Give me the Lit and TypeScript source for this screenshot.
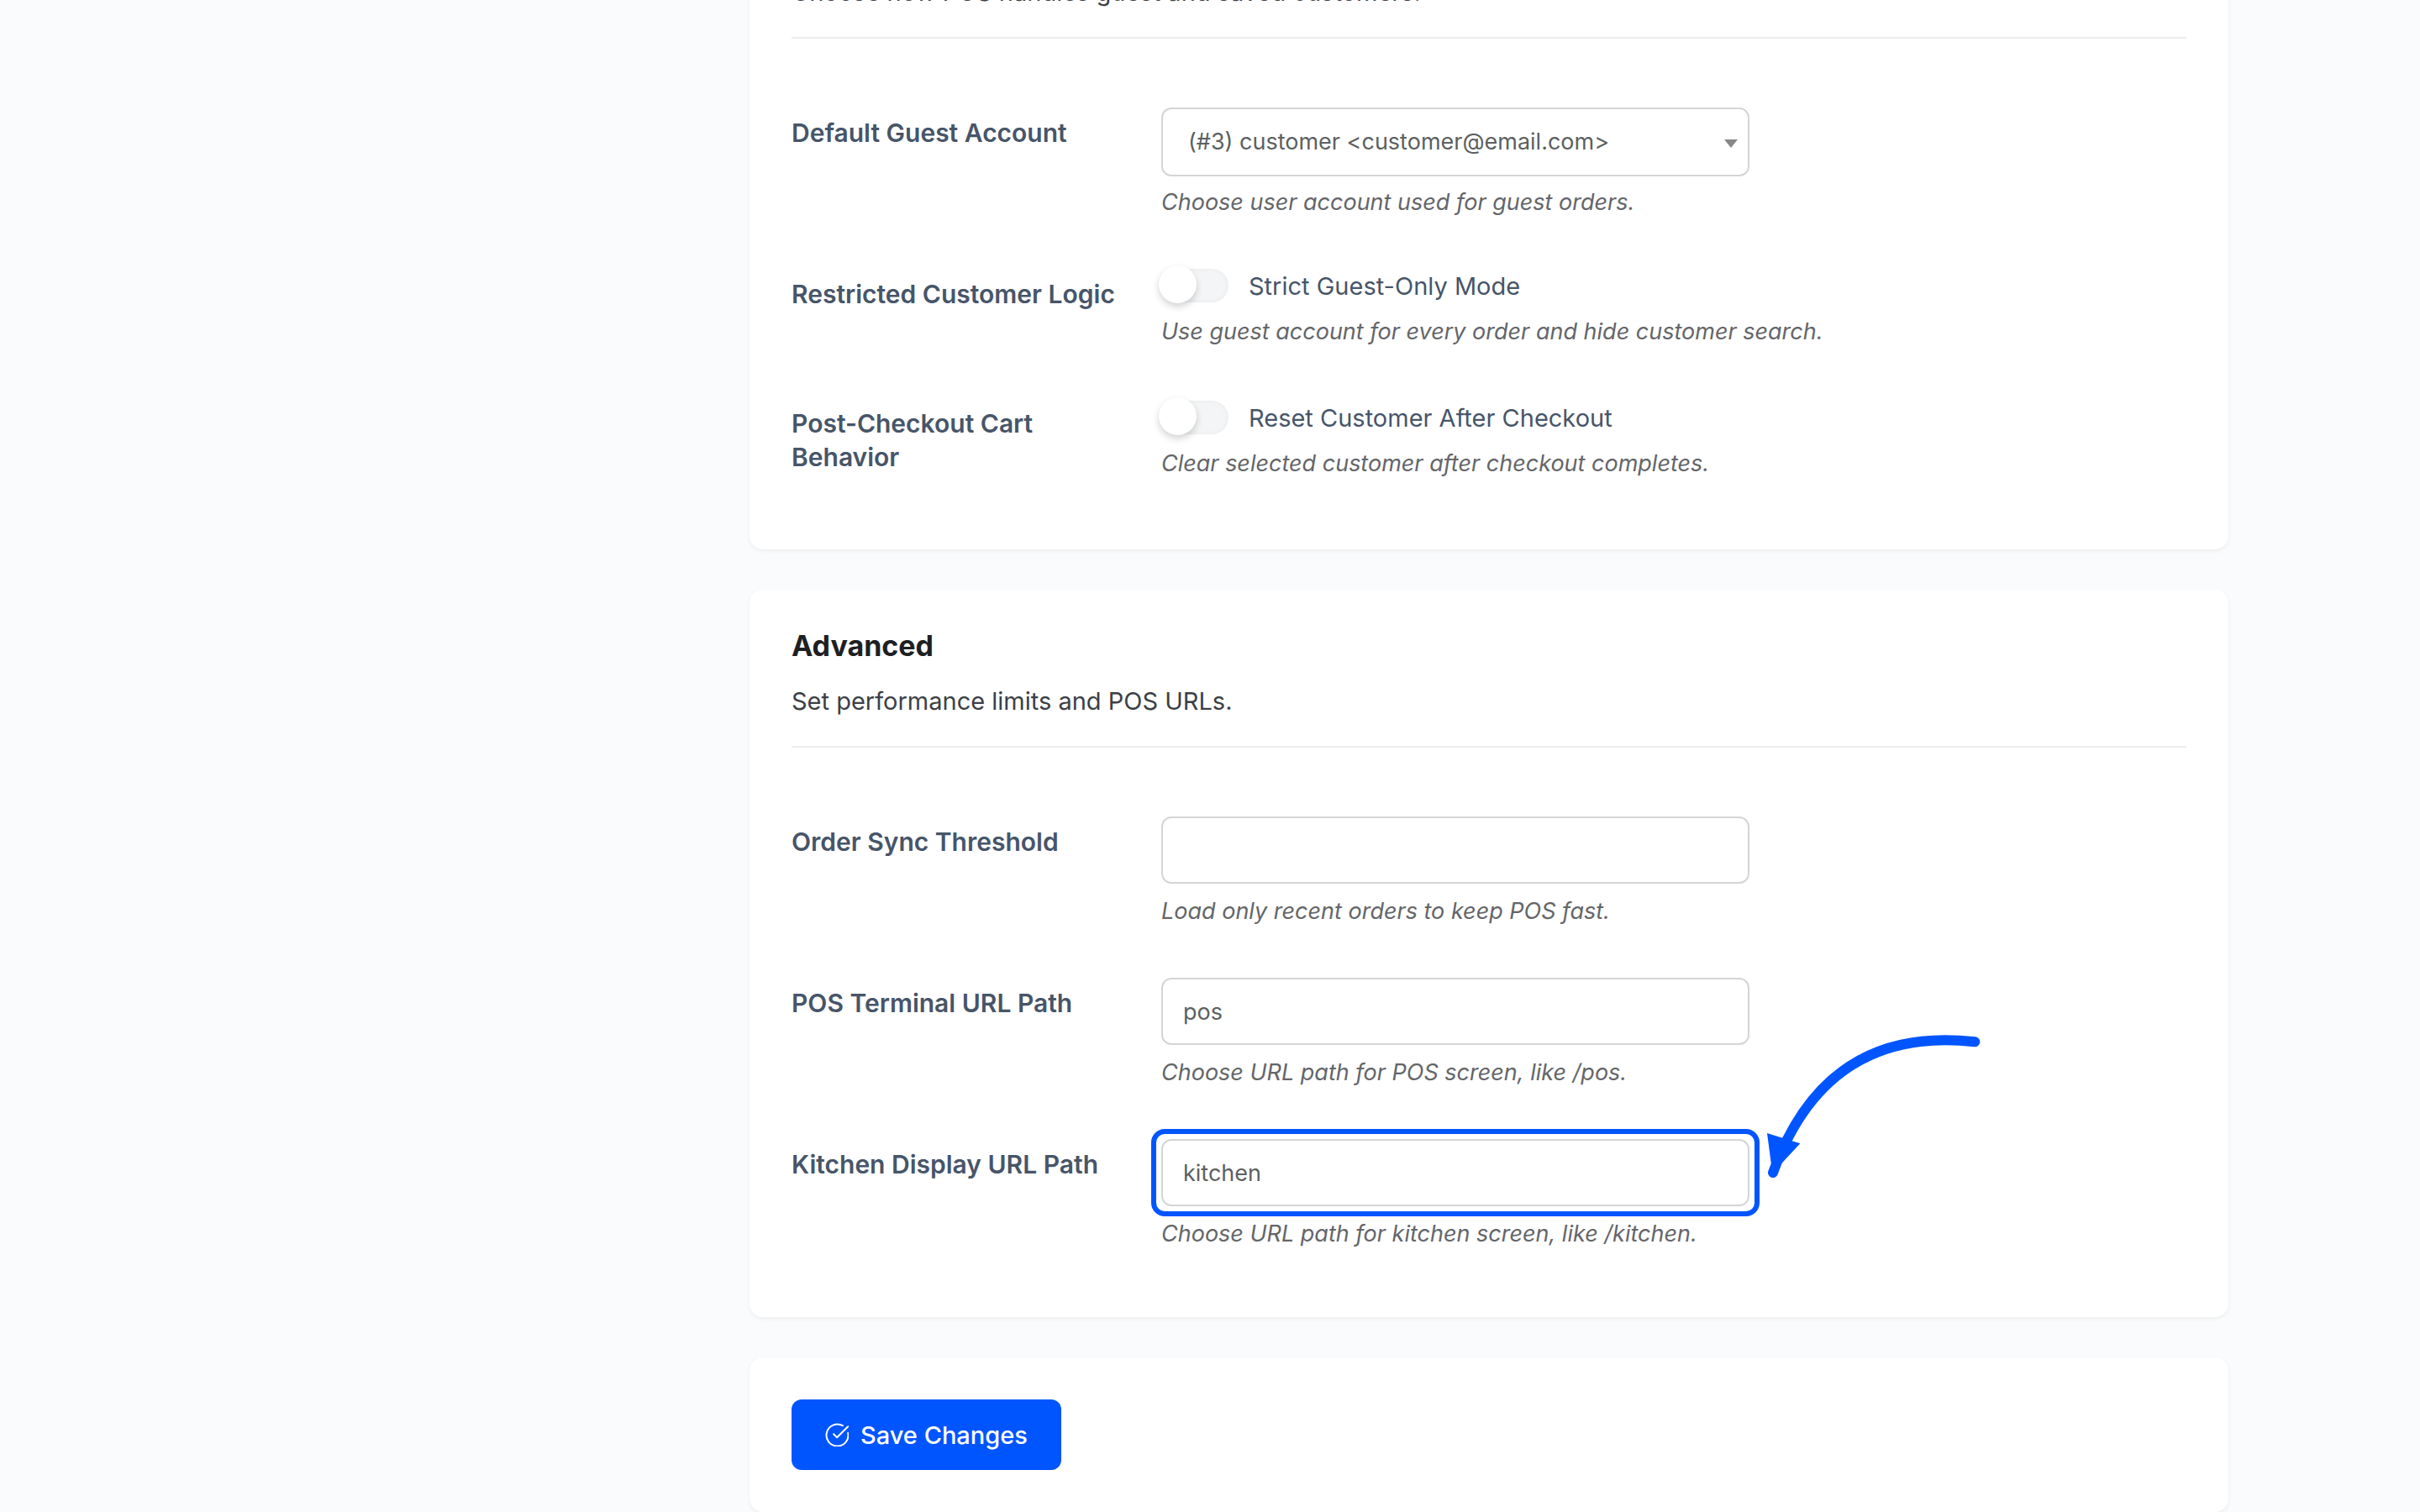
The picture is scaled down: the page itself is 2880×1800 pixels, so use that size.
import { LitElement, html, css, svg, nothing, type TemplateResult } from "lit";
import { customElement, property } from "lit/decorators.js";

const saveIcon = svg`
  <svg class="icon" viewBox="0 0 28 28" width="28" height="28" fill="none" stroke="currentColor"
    stroke-width="2" stroke-linecap="round" stroke-linejoin="round" aria-hidden="true">
    <path d="M20.8 3.2A13 13 0 1 0 27.2 11.8" />
    <path d="M10.1 13.2L14.1 17.2L27.2 4.2" />
  </svg>`;

/** White panel with an optional heading block above its rows. */
@customElement("settings-card")
export class SettingsCard extends LitElement {
  @property() heading = "";
  @property() description = "";

  static styles = css`
    :host {
      display: block;
      background: #ffffff;
      border-radius: 16px;
      padding: 50px;
      box-shadow: 0 2px 5px rgba(0, 0, 0, 0.06);
    }
    :host([continued]) {
      padding-top: 0;
      border-radius: 0 0 16px 16px;
      margin-top: -32px;
    }
    .head {
      padding-bottom: 30px;
      margin-bottom: 52px;
      border-bottom: 2px solid #ececed;
    }
    .title {
      margin: 0 0 26px;
      font-size: 34px;
      line-height: 34px;
      font-weight: 700;
      color: #1d2023;
    }
    .text {
      margin: 0;
      font-size: 29px;
      line-height: 46px;
      color: #3c4045;
    }
  `;

  render() {
    return html`
      ${this.description
        ? html`<header class="head">
            ${this.heading ? html`<h2 class="title">${this.heading}</h2>` : nothing}
            <p class="text">${this.description}</p>
          </header>`
        : nothing}
      <slot></slot>
    `;
  }
}

@customElement("app-root")
export class AppRoot extends LitElement {
  static styles = css`
    :host {
      display: block;
      min-height: 100vh;
      overflow: hidden;
      background: #fafbfd;
      font-family: Inter, "Liberation Sans", sans-serif;
      font-size: 29px;
    }
    .page {
      display: flex;
      flex-direction: column;
      gap: 48px;
      padding: 0 228px 0 892px;
    }
    .row {
      display: grid;
      grid-template-columns: 440px 1fr;
    }
    .name {
      padding: 40px 30px 40px 0;
      font-size: 30px;
      line-height: 40px;
      font-weight: 600;
      color: #475569;
    }
    .control {
      align-self: center;
      padding: 30px 0 28px;
    }
    .box {
      position: relative;
      max-width: 700px;
    }
    .field {
      display: block;
      box-sizing: border-box;
      width: 100%;
      height: 80px;
      margin: 0;
      padding: 0 24px;
      border: 2px solid #d3d5d7;
      border-radius: 12px;
      background: #ffffff;
      font: inherit;
      font-size: 27px;
      color: #5c5f62;
      outline: none;
    }
    .select {
      appearance: none;
      height: 82px;
      margin-bottom: -2px;
      padding: 0 48px 2px 30px;
    }
    .caret {
      position: absolute;
      right: 14px;
      top: 38px;
      pointer-events: none;
    }
    .help {
      margin: 12px 0 0;
      font-size: 27px;
      line-height: 42px;
      font-style: italic;
      color: #646669;
    }
    .toggle {
      display: flex;
      gap: 24px;
      line-height: 42px;
      color: #475569;
    }
    .switch {
      appearance: none;
      position: relative;
      flex: none;
      width: 80px;
      height: 40px;
      margin: 0;
      border-radius: 20px;
      background: #f3f5f6;
      box-shadow: inset 0 0 6px rgba(0, 0, 0, 0.05);
    }
    .switch::before {
      content: "";
      position: absolute;
      left: -3px;
      top: -4px;
      width: 45px;
      height: 45px;
      border-radius: 50%;
      background: #ffffff;
      box-shadow: 0 4px 8px rgba(0, 0, 0, 0.18);
    }
    .switch:checked::before {
      left: 38px;
    }
    .ring {
      position: absolute;
      inset: -12px;
      border: 6px solid #0055ff;
      border-radius: 16px;
      pointer-events: none;
    }
    .pointer {
      position: absolute;
      left: 100%;
      top: -140px;
      margin-left: 6px;
      pointer-events: none;
    }
    .save {
      display: flex;
      align-items: center;
      gap: 14px;
      height: 84px;
      padding: 0 40px;
      border: 0;
      border-radius: 12px;
      background: #0055ff;
      color: #ffffff;
      font: inherit;
      font-weight: 500;
    }
  `;

  private row(id: string, name: string, control: TemplateResult, help: string) {
    return html`
      <div class="row">
        <label class="name" for=${id}>${name}</label>
        <div class="control">
          ${control}
          <p class="help">${help}</p>
        </div>
      </div>
    `;
  }

  private input(id: string, value = "", highlight = false) {
    return html`
      <div class="box">
        <input class="field" id=${id} type="text" .value=${value} />
        ${highlight
          ? html`<div class="ring"></div>
              <svg class="pointer" viewBox="144 48 840 600" width="280" height="200" aria-hidden="true">
                <path d="M931 121Q400 60 210 588" fill="none" stroke="#0055ff" stroke-width="36" stroke-linecap="round" />
                <path d="M189 447L307 484L208 590Z" fill="#0055ff" />
              </svg>`
          : nothing}
      </div>
    `;
  }

  private toggle(id: string, text: string) {
    return html`
      <label class="toggle">
        <input class="switch" id=${id} type="checkbox" />
        <span>${text}</span>
      </label>
    `;
  }

  render() {
    return html`
      <main class="page">
        <settings-card continued description="Choose how POS handles guest and saved customers.">
          ${this.row(
            "guest",
            "Default Guest Account",
            html`<div class="box">
              <select class="field select" id="guest">
                <option>(#3) customer &lt;customer@email.com&gt;</option>
              </select>
              <svg class="caret" viewBox="0 0 16 10" width="16" height="10" aria-hidden="true">
                <path d="M0 0H16L8 10Z" fill="#888888" />
              </svg>
            </div>`,
            "Choose user account used for guest orders."
          )}
          ${this.row(
            "strict",
            "Restricted Customer Logic",
            this.toggle("strict", "Strict Guest-Only Mode"),
            "Use guest account for every order and hide customer search."
          )}
          ${this.row(
            "reset",
            "Post-Checkout Cart Behavior",
            this.toggle("reset", "Reset Customer After Checkout"),
            "Clear selected customer after checkout completes."
          )}
        </settings-card>

        <settings-card heading="Advanced" description="Set performance limits and POS URLs.">
          ${this.row("threshold", "Order Sync Threshold", this.input("threshold"), "Load only recent orders to keep POS fast.")}
          ${this.row("pos", "POS Terminal URL Path", this.input("pos", "pos"), "Choose URL path for POS screen, like /pos.")}
          ${this.row(
            "kitchen",
            "Kitchen Display URL Path",
            this.input("kitchen", "kitchen", true),
            "Choose URL path for kitchen screen, like /kitchen."
          )}
        </settings-card>

        <settings-card>
          <button class="save" type="button">${saveIcon}Save Changes</button>
        </settings-card>
      </main>
    `;
  }
}
